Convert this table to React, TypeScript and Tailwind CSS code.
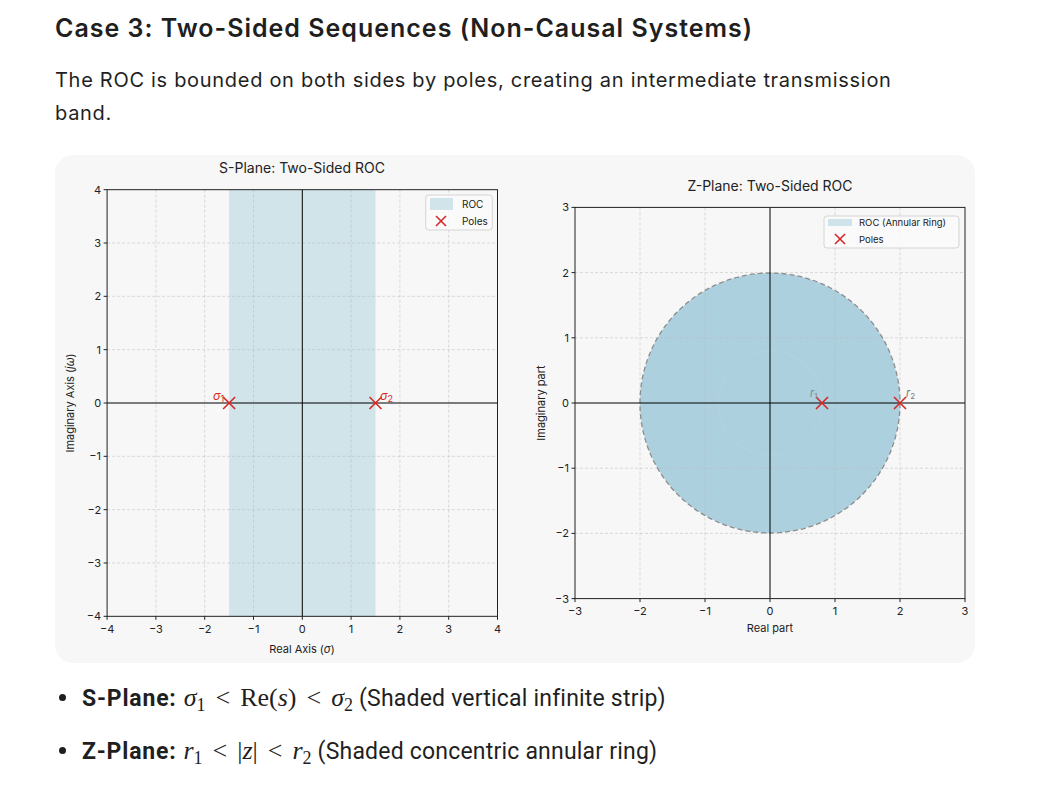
import React from "react";

const F = "Inter, 'Open Sans', sans-serif";
const RED = "#d62728";

function Cross({ x, y, s = 6 }: { x: number; y: number; s?: number }) {
  return (
    <g stroke={RED} strokeWidth={1.6}>
      <line x1={x - s} y1={y - s} x2={x + s} y2={y + s} />
      <line x1={x - s} y1={y + s} x2={x + s} y2={y - s} />
    </g>
  );
}

const minus = (v: number) => (v < 0 ? "\u2212" + Math.abs(v) : String(v));

function SPlane() {
  const X = (v: number) => 247.3 + v * 48.8;
  const Y = (v: number) => 248 - v * 53.33;
  const ticks = [-4, -3, -2, -1, 0, 1, 2, 3, 4];
  const grid = [-3, -2, -1, 1, 2, 3];
  return (
    <svg width={460} height={508} viewBox="0 0 460 508" fontFamily={F}>
      <text x={247} y={18} fontSize={14} textAnchor="middle" fill="#222">
        S-Plane: Two-Sided ROC
      </text>
      <rect x={X(-1.5)} y={Y(4)} width={X(1.5) - X(-1.5)} height={Y(-4) - Y(4)} fill="#d1e4ea" />
      {grid.map((g) => (
        <line key={"v" + g} x1={X(g)} x2={X(g)} y1={Y(4)} y2={Y(-4)} stroke="#b8b8b8" strokeOpacity={0.6} strokeDasharray="3 2" strokeWidth={0.8} />
      ))}
      {grid.map((g) => (
        <line key={"h" + g} y1={Y(g)} y2={Y(g)} x1={X(-4)} x2={X(4)} stroke="#b8b8b8" strokeOpacity={0.6} strokeDasharray="3 2" strokeWidth={0.8} />
      ))}
      <line x1={X(0)} x2={X(0)} y1={Y(4)} y2={Y(-4)} stroke="#000" strokeWidth={1} />
      <line x1={X(-4)} x2={X(4)} y1={Y(0)} y2={Y(0)} stroke="#000" strokeWidth={1.2} />
      <rect x={X(-4)} y={Y(4)} width={X(4) - X(-4)} height={Y(-4) - Y(4)} fill="none" stroke="#222" strokeWidth={1} />
      {ticks.map((t) => (
        <g key={"t" + t}>
          <line x1={X(t)} x2={X(t)} y1={Y(-4)} y2={Y(-4) + 3.5} stroke="#222" />
          <line y1={Y(t)} y2={Y(t)} x1={X(-4)} x2={X(-4) - 3.5} stroke="#222" />
          <text x={X(t)} y={Y(-4) + 17} fontSize={11} textAnchor="middle" fill="#222">
            {minus(t)}
          </text>
          <text x={X(-4) - 6} y={Y(t) + 4} fontSize={11} textAnchor="end" fill="#222">
            {minus(t)}
          </text>
        </g>
      ))}
      <text x={247} y={498} fontSize={11} textAnchor="middle" fill="#222">
        Real Axis (<tspan fontStyle="italic">σ</tspan>)
      </text>
      <text x={0} y={0} fontSize={11} textAnchor="middle" fill="#222" transform="translate(19 248) rotate(-90)">
        Imaginary Axis (<tspan fontStyle="italic">jω</tspan>)
      </text>
      <Cross x={X(-1.5)} y={Y(0)} />
      <Cross x={X(1.5)} y={Y(0)} />
      <text x={158} y={245} fontSize={12} fill={RED} fontStyle="italic">
        σ<tspan fontSize={9} dy={2} fontStyle="normal">1</tspan>
      </text>
      <text x={325} y={245} fontSize={12} fill={RED} fontStyle="italic">
        σ<tspan fontSize={9} dy={2} fontStyle="normal">2</tspan>
      </text>
      <rect x={370.7} y={40} width={66.6} height={35} rx={3} fill="#fafafa" fillOpacity={0.85} stroke="#d4d4d4" />
      <rect x={375} y={43} width={23} height={12} fill="#d1e4ea" />
      <text x={407} y={52.5} fontSize={10} fill="#222">
        ROC
      </text>
      <Cross x={386} y={66} s={5} />
      <text x={407} y={69.5} fontSize={10} fill="#222">
        Poles
      </text>
    </svg>
  );
}

function ZPlane() {
  const X = (v: number) => 255 + v * 65;
  const Y = (v: number) => 248 - v * 65.2;
  const ticks = [-3, -2, -1, 0, 1, 2, 3];
  const grid = [-2, -1, 1, 2];
  return (
    <svg width={460} height={508} viewBox="0 0 460 508" fontFamily={F}>
      <text x={255} y={36} fontSize={14} textAnchor="middle" fill="#222">
        Z-Plane: Two-Sided ROC
      </text>
      <circle cx={X(0)} cy={Y(0)} r={130} fill="#add0df" />
      <circle cx={X(0)} cy={Y(0)} r={52} fill="none" stroke="#ffffff" strokeOpacity={0.05} strokeWidth={1.5} />
      {grid.map((g) => (
        <line key={"v" + g} x1={X(g)} x2={X(g)} y1={Y(3)} y2={Y(-3)} stroke="#b8b8b8" strokeOpacity={0.6} strokeDasharray="3 2" strokeWidth={0.8} />
      ))}
      {grid.map((g) => (
        <line key={"h" + g} y1={Y(g)} y2={Y(g)} x1={X(-3)} x2={X(3)} stroke="#b8b8b8" strokeOpacity={0.6} strokeDasharray="3 2" strokeWidth={0.8} />
      ))}
      <circle cx={X(0)} cy={Y(0)} r={130} fill="none" stroke="#8c8c8c" strokeWidth={1.3} strokeDasharray="5 3" />
      <line x1={X(0)} x2={X(0)} y1={Y(3)} y2={Y(-3)} stroke="#000" strokeWidth={1} />
      <line x1={X(-3)} x2={X(3)} y1={Y(0)} y2={Y(0)} stroke="#000" strokeWidth={1.2} />
      <rect x={X(-3)} y={Y(3)} width={X(3) - X(-3)} height={Y(-3) - Y(3)} fill="none" stroke="#222" strokeWidth={1} />
      {ticks.map((t) => (
        <g key={"t" + t}>
          <line x1={X(t)} x2={X(t)} y1={Y(-3)} y2={Y(-3) + 3.5} stroke="#222" />
          <line y1={Y(t)} y2={Y(t)} x1={X(-3)} x2={X(-3) - 3.5} stroke="#222" />
          <text x={X(t)} y={Y(-3) + 16} fontSize={11} textAnchor="middle" fill="#222">
            {minus(t)}
          </text>
          <text x={X(-3) - 6} y={Y(t) + 4} fontSize={11} textAnchor="end" fill="#222">
            {minus(t)}
          </text>
        </g>
      ))}
      <text x={255} y={477} fontSize={11} textAnchor="middle" fill="#222">
        Real part
      </text>
      <text x={0} y={0} fontSize={11} textAnchor="middle" fill="#222" transform="translate(30 248) rotate(-90)">
        Imaginary part
      </text>
      <Cross x={X(0.8)} y={Y(0)} />
      <Cross x={X(2)} y={Y(0)} />
      <text x={295} y={242} fontSize={11} fill="#8a8a8a" fontStyle="italic">
        r<tspan fontSize={8} dy={2} fontStyle="normal">1</tspan>
      </text>
      <text x={391} y={242} fontSize={11} fill="#7a7a7a" fontStyle="italic">
        r<tspan fontSize={8} dy={2} fontStyle="normal">2</tspan>
      </text>
      <rect x={309} y={61} width={135} height={32} rx={3} fill="#fafafa" fillOpacity={0.85} stroke="#d4d4d4" />
      <rect x={313} y={64} width={24} height={7} fill="#cfe3ea" />
      <text x={344} y={71} fontSize={9.5} fill="#222">
        ROC (Annular Ring)
      </text>
      <Cross x={325} y={84} s={5} />
      <text x={344} y={87.5} fontSize={9.5} fill="#222">
        Poles
      </text>
    </svg>
  );
}

const SERIF = "'Liberation Serif', 'DejaVu Serif', serif";

function Bullet() {
  return <span className="mr-[16px] ml-[4px] inline-block h-[7px] w-[7px] translate-y-[-5px] rounded-full bg-[#1f1f1f]" />;
}

export default function App() {
  return (
    <div className="min-h-[789px] w-[1051px] bg-white pl-[55px] pt-[12px] text-[#1f1f1f]" style={{ fontFamily: F }}>
      <h1 className="text-[25px] font-semibold leading-[32px] tracking-[1px]">
        Case 3: Two-Sided Sequences (Non-Causal Systems)
      </h1>
      <p className="mt-[20px] w-[870px] text-[20px] leading-[33px] tracking-[0.7px]">
        The ROC is bounded on both sides by poles, creating an intermediate transmission band.
      </p>
      <div className="mt-[25px] flex h-[508px] w-[920px] overflow-hidden rounded-[18px] bg-[#f7f7f7]">
        <SPlane />
        <ZPlane />
      </div>
      <ul className="mt-[20px] flex flex-col gap-[22px] text-[23px] leading-[30px] tracking-[0.2px]" style={{ fontFamily: "Roboto, sans-serif" }}>
        <li className="flex items-baseline">
          <Bullet />
          <span className="font-bold tracking-[0.8px]">S-Plane:</span>
          <span className="ml-[7px] text-[26px] tracking-normal" style={{ fontFamily: SERIF }}>
            <i>σ</i>
            <sub className="text-[18px]">1</sub>
            <span className="mx-[10px]">&lt;</span>
            Re(<i>s</i>)
            <span className="mx-[10px]">&lt;</span>
            <i>σ</i>
            <sub className="text-[18px]">2</sub>
          </span>
          <span className="ml-[6px]">(Shaded vertical infinite strip)</span>
        </li>
        <li className="flex items-baseline">
          <Bullet />
          <span className="font-bold tracking-[0.8px]">Z-Plane:</span>
          <span className="ml-[7px] text-[26px] tracking-normal" style={{ fontFamily: SERIF }}>
            <i>r</i>
            <sub className="text-[18px]">1</sub>
            <span className="mx-[10px]">&lt;</span>
            |<i>z</i>|
            <span className="mx-[10px]">&lt;</span>
            <i>r</i>
            <sub className="text-[18px]">2</sub>
          </span>
          <span className="ml-[6px]">(Shaded concentric annular ring)</span>
        </li>
      </ul>
    </div>
  );
}
